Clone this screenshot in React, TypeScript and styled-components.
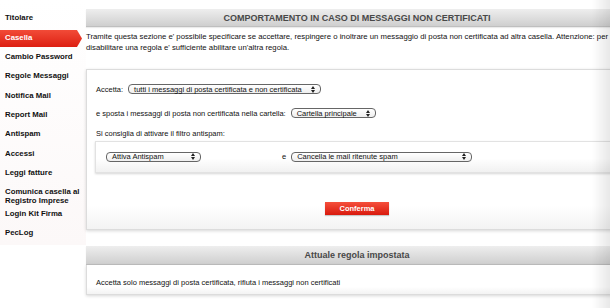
import styled, { createGlobalStyle } from "styled-components";

const GlobalStyle = createGlobalStyle`
  html, body {
    margin: 0;
    padding: 0;
    background: #fff;
  }
  body {
    width: 610px;
    height: 308px;
    overflow: hidden;
    font-family: "Liberation Sans", Arial, Helvetica, sans-serif;
    color: #111;
  }
`;

const Page = styled.div`
  display: flex;
  align-items: flex-start;
  width: 610px;
  height: 308px;
  overflow: hidden;
`;

const Sidebar = styled.nav`
  flex: 0 0 86px;
  height: 245px;
  padding-top: 9px;
  box-sizing: border-box;
  background: linear-gradient(to bottom, #ffffff 0%, #fcf8f8 100%);
`;

const MenuItem = styled.div<{ $active?: boolean; $tall?: boolean }>`
  box-sizing: border-box;
  width: 83px;
  height: ${({ $tall }) => ($tall ? "21.4px" : "19.35px")};
  padding: 5.3px 0 0 5px;
  font-size: 7.8px;
  line-height: 8.3px;
  font-weight: bold;
  color: ${({ $active }) => ($active ? "#fff" : "#111")};
  background: ${({ $active }) =>
    $active ? "linear-gradient(#f4503c, #dc1d10)" : "transparent"};
  clip-path: ${({ $active }) =>
    $active
      ? "polygon(0 8%, 77px 8%, 82px 52%, 77px 97%, 0 97%)"
      : "none"};
`;

const Main = styled.main`
  flex: 0 0 542px;
  padding-top: 9px;
`;

const PanelHeader = styled.div<{ $h: number; $size: number }>`
  box-sizing: border-box;
  height: ${({ $h }) => $h}px;
  display: flex;
  align-items: center;
  justify-content: center;
  background: linear-gradient(#eeeeee, #cfcfcf);
  border-bottom: 1px solid #bfbfbf;
  font-size: ${({ $size }) => $size}px;
  font-weight: bold;
  color: #484848;
  box-shadow: 0 1px 1px rgba(0, 0, 0, 0.08);
`;

const Intro = styled.p`
  margin: 5px 0 0;
  font-size: 7.75px;
  line-height: 10.5px;
  color: #111;
`;

const Box = styled.section`
  margin-top: 16px;
  padding: 13px 9px 14px;
  border: 1px solid #dcdcdc;
  background: linear-gradient(#ffffff 85%, #f3f3f3);
  box-shadow: 0 1px 3px rgba(0, 0, 0, 0.16);
`;

const Row = styled.div<{ $top?: number }>`
  display: flex;
  align-items: center;
  gap: 5px;
  height: 12px;
  margin-top: ${({ $top }) => $top ?? 0}px;
  font-size: 7.5px;
  white-space: nowrap;
`;

const InnerBox = styled.div`
  box-sizing: border-box;
  display: flex;
  align-items: center;
  height: 32px;
  margin: 1.7px 0 0 -1px;
  padding-left: 10px;
  border: 1px solid #e2e2e2;
  background: linear-gradient(#ffffff 55%, #f1f1f1);
  box-shadow: 0 1px 2px rgba(0, 0, 0, 0.16);
  font-size: 7.5px;
`;

const Cell = styled.div<{ $w?: number }>`
  flex: 0 0 ${({ $w }) => ($w ? `${$w}px` : "auto")};
  display: flex;
  align-items: center;
`;

const Joiner = styled.span`
  margin-right: 5px;
`;

const SelectBox = styled.div<{ $w: number }>`
  box-sizing: border-box;
  width: ${({ $w }) => $w}px;
  height: 10px;
  display: inline-flex;
  align-items: center;
  justify-content: space-between;
  padding: 0 5px;
  border: 1px solid #666;
  border-radius: 4px;
  background: linear-gradient(#ffffff, #efefef);
  font-size: 7.5px;
  color: #111;
  white-space: nowrap;
`;

const ButtonRow = styled.div`
  display: flex;
  justify-content: center;
  margin-top: 29px;
`;

const Button = styled.button`
  width: 64px;
  height: 13px;
  padding: 0;
  border: none;
  background: linear-gradient(#f5503c, #d91a0e);
  color: #fff;
  font-family: inherit;
  font-size: 7.5px;
  font-weight: bold;
  box-shadow: 0 1px 1px rgba(0, 0, 0, 0.2);
`;

const Panel = styled.section`
  margin-top: 16px;
`;

const PanelBody = styled.div`
  box-sizing: border-box;
  height: 30px;
  padding: 13px 9px 0;
  border: 1px solid #dcdcdc;
  border-top: none;
  background: linear-gradient(#ffffff 75%, #f3f3f3);
  box-shadow: 0 1px 3px rgba(0, 0, 0, 0.16);
  font-size: 7.5px;
  line-height: 10px;
`;

const EdgeShade = styled.div`
  position: fixed;
  top: 0;
  right: 0;
  bottom: 0;
  width: 18px;
  pointer-events: none;
  background: linear-gradient(to right, rgba(0, 0, 0, 0), rgba(0, 0, 0, 0.09));
`;

const Arrows = () => (
  <svg width="4" height="7" viewBox="0 0 4 7">
    <path d="M0 3 L2 0 L4 3 Z M0 4 L2 7 L4 4 Z" fill="#222" />
  </svg>
);

const Select = ({ w, label }: { w: number; label: string }) => (
  <SelectBox $w={w}>
    <span>{label}</span>
    <Arrows />
  </SelectBox>
);

const menu = [
  "Titolare",
  "Casella",
  "Cambio Password",
  "Regole Messaggi",
  "Notifica Mail",
  "Report Mail",
  "Antispam",
  "Accessi",
  "Leggi fatture",
  "Comunica casella al Registro Imprese",
  "Login Kit Firma",
  "PecLog",
];

export default function App() {
  return (
    <>
      <GlobalStyle />
      <Page>
        <Sidebar>
          {menu.map((item) => (
            <MenuItem
              key={item}
              $active={item === "Casella"}
              $tall={item.startsWith("Comunica")}
            >
              {item}
            </MenuItem>
          ))}
        </Sidebar>
        <Main>
          <PanelHeader $h={18} $size={9}>
            COMPORTAMENTO IN CASO DI MESSAGGI NON CERTIFICATI
          </PanelHeader>
          <Intro>
            Tramite questa sezione e' possibile specificare se accettare,
            respingere o inoltrare un messaggio di posta non certificata ad
            altra casella. Attenzione: per
            <br />
            disabilitare una regola e' sufficiente abilitare un'altra regola.
          </Intro>
          <Box>
            <Row>
              Accetta:
              <Select
                w={193}
                label="tutti i messaggi di posta certificata e non certificata"
              />
            </Row>
            <Row $top={12}>
              e sposta i messaggi di posta non certificata nella cartella:
              <Select w={85} label="Cartella principale" />
            </Row>
            <Row $top={8.3}>Si consiglia di attivare il filtro antispam:</Row>
            <InnerBox>
              <Cell $w={176}>
                <Select w={95} label="Attiva Antispam" />
              </Cell>
              <Cell>
                <Joiner>e</Joiner>
                <Select w={181} label="Cancella le mail ritenute spam" />
              </Cell>
            </InnerBox>
            <ButtonRow>
              <Button>Conferma</Button>
            </ButtonRow>
          </Box>
          <Panel>
            <PanelHeader $h={19} $size={9}>
              Attuale regola impostata
            </PanelHeader>
            <PanelBody>
              Accetta solo messaggi di posta certificata, rifiuta i messaggi
              non certificati
            </PanelBody>
          </Panel>
        </Main>
      </Page>
      <EdgeShade />
    </>
  );
}
